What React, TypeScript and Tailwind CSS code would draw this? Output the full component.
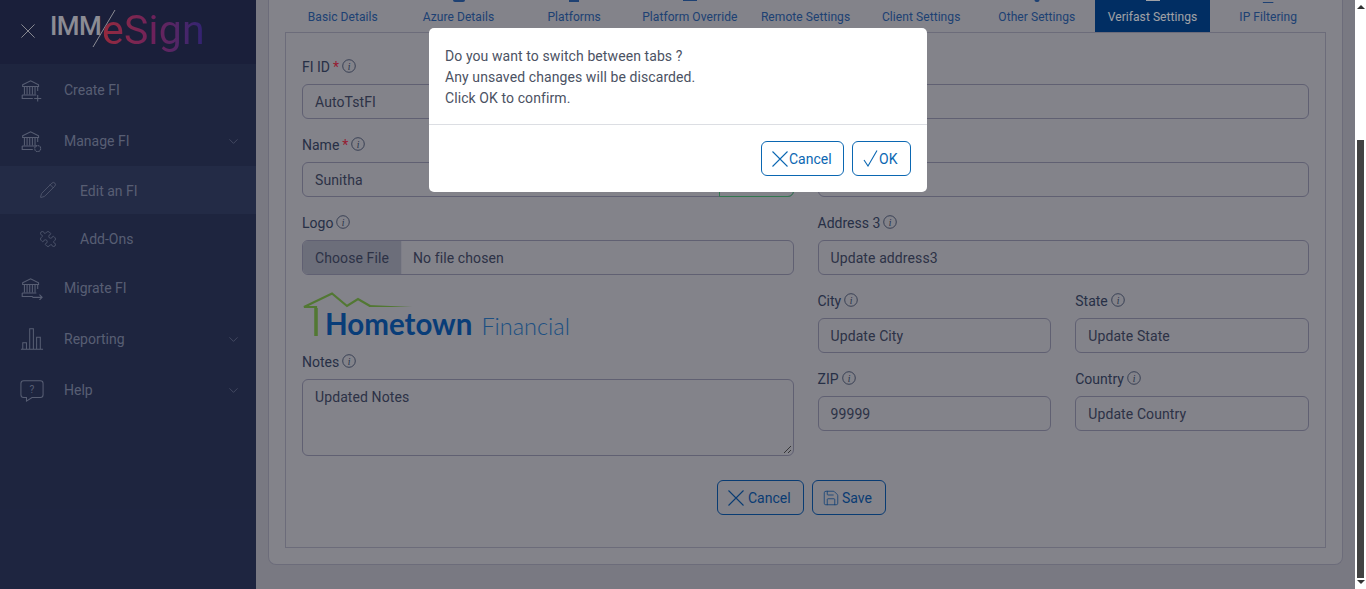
import type { ReactNode } from 'react';
import { ChevronDown, Save, Pencil, Puzzle } from 'lucide-react';

const tabs = [
  { name: 'Basic Details', peek: '' },
  { name: 'Azure Details', peek: 'w-[12px] h-[2px] rounded-b-full' },
  { name: 'Platforms', peek: 'w-[10px] h-[2px]' },
  { name: 'Platform Override', peek: 'w-[14px] h-[1px]' },
  { name: 'Remote Settings', peek: '' },
  { name: 'Client Settings', peek: '' },
  { name: 'Other Settings', peek: 'w-[5px] h-[2px] rounded-b-full' },
  { name: 'Verifast Settings', peek: 'w-[14px] h-[1px]' },
  { name: 'IP Filtering', peek: 'w-[11px] h-[3px] [clip-path:inset(2px_0_0_0)]' },
];

function Cross({ size = 15 }: { size?: number }) {
  return (
    <svg width={size} height={size} viewBox="0 0 16 16" fill="none" stroke="currentColor" strokeWidth="1.1" className="shrink-0">
      <path d="M.5.5l15 15M15.500.5l-15 15" />
    </svg>
  );
}

function Bank({ badge }: { badge?: 'plus' | 'gear' | 'arrow' }) {
  return (
    <svg width="23" height="23" viewBox="0 0 26 26" fill="none" stroke="currentColor" strokeWidth="1.2">
      <path d="M3 6.500 12 2 21 6.500V8.500H3Z" />
      <path d="M5 8.500v9M8 8.500v9M11 8.500v9M14 8.500v9M17 8.500v9M20 8.500v5" />
      <path d="M2.500 18h16M2.500 18v4h12" />
      {badge === 'plus' && <path d="M20 18v7.500M16 22h8" />}
      {badge === 'gear' && <circle cx="20" cy="21" r="3.400" strokeDasharray="2 0.6" />}
      {badge === 'arrow' && <path d="M14 23h11M22 20l3 3-3 3" />}
    </svg>
  );
}

function Bars() {
  return (
    <svg width="24" height="24" viewBox="0 0 26 26" fill="none" stroke="currentColor" strokeWidth="1.1">
      <path d="M1 24h24M3 24v-7h4v7M10.500 24V2h4v22M18 24V11h4v13" />
    </svg>
  );
}

function Question() {
  return (
    <svg width="24" height="24" viewBox="0 0 26 26" fill="none" stroke="currentColor" strokeWidth="1.1">
      <path d="M4 2h18a3 3 0 0 1 3 3v12a3 3 0 0 1-3 3H13l-6 4v-4H4a3 3 0 0 1-3-3V5a3 3 0 0 1 3-3Z" />
      <text x="13" y="15" fontSize="11" textAnchor="middle" fill="currentColor" stroke="none">?</text>
    </svg>
  );
}

function NavItem({ icon, label, chevron, height }: { icon: ReactNode; label: string; chevron?: boolean; height: string }) {
  return (
    <div className={`flex items-center ${height} pl-[20px] pr-[15px]`}>
      <span className="w-[44px] shrink-0 flex">{icon}</span>
      <span className="flex-1 text-[14px]">{label}</span>
      {chevron && <ChevronDown size={15} strokeWidth={1} />}
    </div>
  );
}

function Sidebar() {
  return (
    <aside className="w-[256px] shrink-0 bg-[#2e3962] text-[#8791b1]">
      <div className="h-[64px] bg-[#283059] flex items-start pl-[21px] overflow-hidden">
        <span className="mt-[24px] mr-[15px] text-[#d7d7e4]"><Cross size={14} /></span>
        <span className="mt-[11px] text-[26px] font-medium text-[#d7d7e4] leading-[30px] tracking-[-0.6px]">IMM</span>
        <svg width="24" height="38" viewBox="0 0 24 38" className="shrink-0 mt-[10px] -ml-[9px] -mr-[14px]" stroke="#d7d7e4" strokeWidth="1">
          <path d="M1 37 23 0" />
        </svg>
        <span className="mt-[6px] text-[41px] leading-[48px] tracking-[0.2px] bg-gradient-to-r from-[#e8405c] via-[#a8348c] to-[#4a35b0] bg-clip-text text-transparent">eSign</span>
      </div>
      <NavItem height="h-[52px]" icon={<Bank badge="plus" />} label="Create FI" />
      <NavItem height="h-[50px]" icon={<Bank badge="gear" />} label="Manage FI" chevron />
      <div className="bg-[#37426c] h-[48px] flex items-center pl-[39px]">
        <Pencil size={18} strokeWidth={1} className="mr-[23px]" />
        <span className="text-[14px] pt-[2px]">Edit an FI</span>
      </div>
      <div className="flex items-center h-[50px] pl-[39px]">
        <Puzzle size={18} strokeWidth={1} className="mr-[23px] -scale-x-100" />
        <span className="text-[14px]">Add-Ons</span>
      </div>
      <NavItem height="h-[49px]" icon={<Bank badge="arrow" />} label="Migrate FI" />
      <NavItem height="h-[52px]" icon={<Bars />} label="Reporting" chevron />
      <NavItem height="h-[51px]" icon={<Question />} label="Help" chevron />
    </aside>
  );
}

function InfoMark() {
  return (
    <svg width="14" height="14" viewBox="0 0 14 14" fill="none" className="shrink-0 -mt-[2px]">
      <circle cx="7" cy="7" r="6.300" stroke="#3c4a6c" strokeWidth="0.8" />
      <text x="7" y="10.500" fontSize="9.500" fontStyle="italic" fontFamily="Liberation Serif" textAnchor="middle" fill="#3c4a6c">i</text>
    </svg>
  );
}

function Label({ text, required }: { text: string; required?: boolean }) {
  return (
    <label className="h-[28px] flex items-center gap-[3px] text-[14px] text-[#3c4a6c] pb-[6px]">
      {text}
      {required && <span className="text-[#e62e4d]">*</span>}
      <InfoMark />
    </label>
  );
}

function Field({ label, value, required, suffix }: { label: string; value?: string; required?: boolean; suffix?: boolean }) {
  return (
    <div className="mb-[15px]">
      <Label text={label} required={required} />
      <div className="h-[35px] flex border border-[#9494b0] rounded-[6px]">
        <span className="flex-1 px-[12px] pt-[2px] flex items-center text-[14px] tracking-[0.1px] text-[#454d6c]">{value}</span>
        {suffix && <span className="w-[75px] -m-[1px] border border-[#4db87b] rounded-r-[6px]" />}
      </div>
    </div>
  );
}

function OutlineBtn({ icon, label, className }: { icon: ReactNode; label: string; className: string }) {
  return (
    <button className={`h-[35px] flex items-center border rounded-[6px] text-[14px] ${className}`}>
      {icon}
      <span className="pt-[2px]">{label}</span>
    </button>
  );
}

function HometownLogo() {
  return (
    <div className="h-[61px] relative pt-[2px]">
      <svg width="112" height="46" viewBox="0 0 112 46" fill="none" className="absolute left-0 top-[2px]">
        <path d="M14 44V15H2L30 1.500 45 14 56 7 68 14" stroke="#7fb84f" strokeWidth="2.200" />
        <path d="M14 44V16" stroke="#7fb84f" strokeWidth="3.500" />
        <path d="M67 13 110 15 67 15Z" fill="#7fb84f" />
      </svg>
      <div className="flex items-baseline pl-[23px] pt-[15px]">
        <span className="font-['Lato'] font-bold text-[29.500px] leading-[34px] text-[#0f5fb9]">Hometown</span>
        <span className="ml-[9px] font-['Lato'] font-light text-[23.500px] leading-[32px] text-[#2e7bc8]">Financial</span>
      </div>
    </div>
  );
}

export default function App() {
  return (
    <div className="h-[589px] flex overflow-hidden font-['Roboto',sans-serif] bg-white relative">
      <Sidebar />
      <main className="flex-1 bg-[#bbbbc8] px-[12px] overflow-hidden">
        <div className="h-[565px] border border-[#a6a6bc] border-t-0 rounded-b-[8px] bg-[#c9c9d5] px-[16px]">
          {/* tab strip, scrolled so only the bottom of the icons shows */}
          <div className="flex h-[32px] overflow-hidden">
            {tabs.map((t) => (
              <div key={t.name} className={`flex-1 relative flex justify-center pt-[8px] text-[12px] tracking-[0.07px] whitespace-nowrap ${t.name === 'Verifast Settings' ? 'bg-[#024798] text-[#f5f8ff]' : 'text-[#2e64b1]'}`}>
                {t.peek && <span className={`absolute top-0 left-1/2 -translate-x-1/2 bg-current ${t.peek}`} />}
                {t.name}
              </div>
            ))}
          </div>
          <div className="border border-[#a6a6bc] h-[516px] px-[16px] pt-[23px]">
            <div className="grid grid-cols-2 gap-x-[24px]">
              <div>
                <Field label="FI ID" value="AutoTstFI" required />
                <Field label="Name" value="Sunitha" required suffix />
                <Label text="Logo" />
                <div className="h-[35px] flex border border-[#9494b0] rounded-[6px] overflow-hidden mb-[15px] text-[14px] tracking-[0.1px] text-[#454d6c]">
                  <span className="w-[99px] pt-[2px] bg-[#a6a9bc] border-r border-[#c0c0d0] flex items-center justify-center">Choose File</span>
                  <span className="px-[11px] pt-[2px] flex items-center">No file chosen</span>
                </div>
                <HometownLogo />
                <Label text="Notes" />
                <div className="h-[77px] border border-[#9494b0] rounded-[6px] px-[12px] py-[7px] text-[14px] tracking-[0.1px] text-[#454d6c] relative">
                  Updated Notes
                  <svg width="9" height="9" viewBox="0 0 9 9" className="absolute right-[1px] bottom-[1px]" stroke="#333" strokeWidth="0.8">
                    <path d="M1 8 8 1M5 8 8 5" />
                  </svg>
                </div>
              </div>
              <div>
                <Field label="Address 1" />
                <Field label="Address 2" />
                <Field label="Address 3" value="Update address3" />
                <div className="grid grid-cols-2 gap-x-[24px]">
                  <Field label="City" value="Update City" />
                  <Field label="State" value="Update State" />
                  <Field label="ZIP" value="99999" />
                  <Field label="Country" value="Update Country" />
                </div>
              </div>
            </div>
            <div className="flex justify-center mt-[24px]">
              <OutlineBtn className="border-[#0f5cb1] text-[#0f5cb1] mr-[8px] w-[87px] pl-[10px] gap-[4px]" icon={<Cross size={16} />} label="Cancel" />
              <OutlineBtn className="border-[#0f5cb1] text-[#0f5cb1] mr-[8px] w-[74px] pl-[9px] gap-[2px]" icon={<Save size={18} strokeWidth={1} />} label="Save" />
            </div>
          </div>
        </div>
      </main>
      {/* browser scrollbar */}
      <div className="w-[11px] shrink-0 bg-white flex flex-col items-center">
        <div className="w-0 h-0 mt-[5px] border-x-[4px] border-x-transparent border-b-[4px] border-b-[#333]" />
        <div className="w-[7px] h-[438px] bg-[#424242] mt-auto mb-[2px]" />
        <div className="w-0 h-0 mb-[5px] border-x-[4px] border-x-transparent border-t-[4px] border-t-[#333]" />
      </div>
      {/* modal backdrop and dialog */}
      <div className="absolute left-0 top-0 bottom-0 right-[11px] bg-black/35">
        <div className="absolute left-[429px] top-[28px] w-[498px] h-[164px] bg-white rounded-[5px]">
          <div className="h-[97px] px-[16px] pt-[18px] border-b border-[#dcdee3] text-[14px] leading-[21px] tracking-[0.09px] text-[#4b5263]">
            <p>Do you want to switch between tabs ?</p>
            <p>Any unsaved changes will be discarded.</p>
            <p>Click OK to confirm.</p>
          </div>
          <div className="flex justify-end gap-[8px] px-[16px] pt-[16px]">
            <OutlineBtn className="border-[#0b67b2] text-[#0b67b2] w-[83px] pl-[10px] gap-[1px]" icon={<Cross size={16} />} label="Cancel" />
            <OutlineBtn className="border-[#0b67b2] text-[#0b67b2] w-[59px] pl-[10px] gap-[1px]" icon={
              <svg width="15" height="17" viewBox="0 0 15 17" fill="none" stroke="currentColor" strokeWidth="1.1" className="shrink-0">
                <path d="M1 10l4 6 9-15.500" />
              </svg>
            } label="OK" />
          </div>
        </div>
      </div>
    </div>
  );
}
